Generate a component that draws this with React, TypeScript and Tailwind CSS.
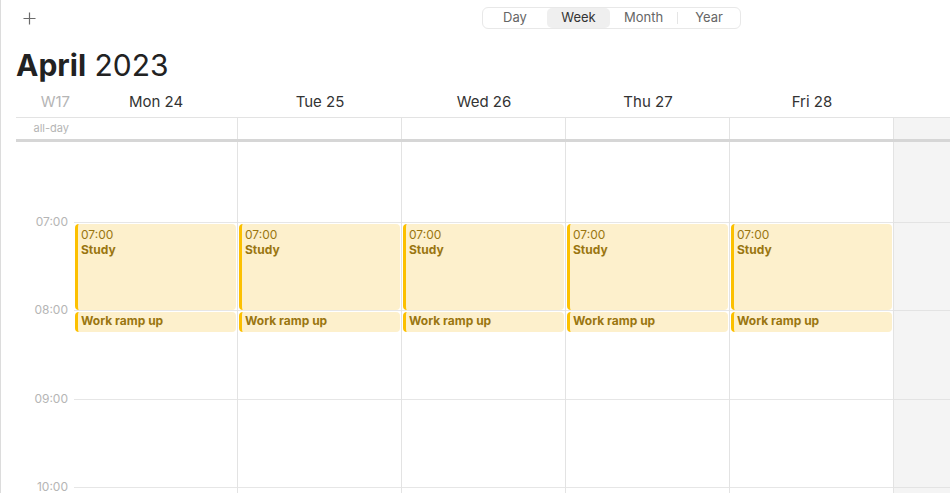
import React from "react";

const days = ["Mon 24", "Tue 25", "Wed 26", "Thu 27", "Fri 28"];
const hours = ["07:00", "08:00", "09:00", "10:00"];

const Event: React.FC<{ top: number; height: number; time?: string; title: string }> = ({ top, height, time, title }) => (
  <div
    className={`absolute left-[1px] right-[1px] rounded-[4px] border-l-[3px] border-[#fcc000] bg-[#fdf0cc] pl-[3px] text-[12px] leading-[15px] text-[#9a7610] ${time ? "pt-[3px]" : "pt-[1px]"}`}
    style={{ top, height }}
  >
    {time && <div>{time}</div>}
    <div className="font-bold">{title}</div>
  </div>
);

const App: React.FC = () => {
  return (
    <div className="w-[950px] h-[493px] overflow-hidden bg-white border-l border-[#dcdcdc] font-['Inter','Liberation_Sans',sans-serif] text-[#262626] flex flex-col">
      {/* toolbar */}
      <div className="h-[36px] shrink-0 flex items-start pt-[7px] pl-[21px]">
        <div className="w-[14px] h-[22px] flex items-center justify-center">
          <svg width="13" height="13" viewBox="0 0 13 13" fill="none" stroke="#6b6b6b" strokeWidth="1.2">
            <path d="M6.5 0.5v12M0.5 6.5h12" />
          </svg>
        </div>
        <div className="ml-[446px] h-[22px] flex items-stretch rounded-[6px] border border-[#e8e8e8] text-[13px] text-[#666]">
          <div className="w-[64px] flex items-center justify-center">Day</div>
          <div className="w-[63px] flex items-center justify-center rounded-[5px] bg-[#efefef] text-[#333]">Week</div>
          <div className="w-[67px] flex items-center justify-center">Month</div>
          <div className="w-px my-[4px] bg-[#e5e5e5]" />
          <div className="w-[62px] flex items-center justify-center">Year</div>
        </div>
      </div>

      {/* title */}
      <div className="h-[48px] shrink-0 pt-[9px] pl-[15px] text-[30px] leading-[40px] text-[#222]">
        <span className="font-bold">April</span> <span className="font-normal">2023</span>
      </div>

      <div className="pl-[15px] flex flex-col flex-1 min-h-0">
        {/* day headers */}
        <div className="h-[34px] shrink-0 flex pt-[3px] border-b border-[#e3e3e3] text-[15px] text-[#333]">
          <div className="w-[58px] flex items-center justify-end pr-[4px] text-[15px] text-[#b5b5b5]">W17</div>
          {days.map((d) => (
            <div key={d} className="w-[164px] flex items-center justify-center">
              {d}
            </div>
          ))}
          <div className="flex-1" />
        </div>

        {/* all-day */}
        <div className="h-[24px] shrink-0 flex border-b-[3px] border-[#d6d6d6]">
          <div className="w-[58px] flex items-center justify-end pr-[5px] text-[11px] text-[#b5b5b5]">all-day</div>
          {days.map((d) => (
            <div key={d} className="w-[164px] border-r border-[#e3e3e3]" />
          ))}
          <div className="flex-1 bg-[#f4f4f4]" />
        </div>

        {/* time grid */}
        <div className="flex flex-1 min-h-0 overflow-hidden">
          <div className="w-[58px] shrink-0">
            <div className="h-[80px]" />
            {hours.map((h) => (
              <div key={h} className="h-[88.33px] relative">
                <span className="absolute right-[6px] -top-[7px] text-[12px] leading-[14px] text-[#b5b5b5]">{h}</span>
              </div>
            ))}
          </div>
          {days.map((d) => (
            <div key={d} className="w-[164px] shrink-0 border-r border-[#e3e3e3] relative">
              <div className="h-[80px]" />
              {hours.map((h) => (
                <div key={h} className="h-[88.33px] border-t border-[#e6e6e6]" />
              ))}
              <Event top={82} height={86} time="07:00" title="Study" />
              <Event top={170} height={20} title="Work ramp up" />
            </div>
          ))}
          <div className="flex-1 bg-[#f4f4f4]">
            <div className="h-[80px]" />
            {hours.map((h) => (
              <div key={h} className="h-[88.33px] border-t border-[#e3e3e3]" />
            ))}
          </div>
        </div>
      </div>
    </div>
  );
};

export default App;
